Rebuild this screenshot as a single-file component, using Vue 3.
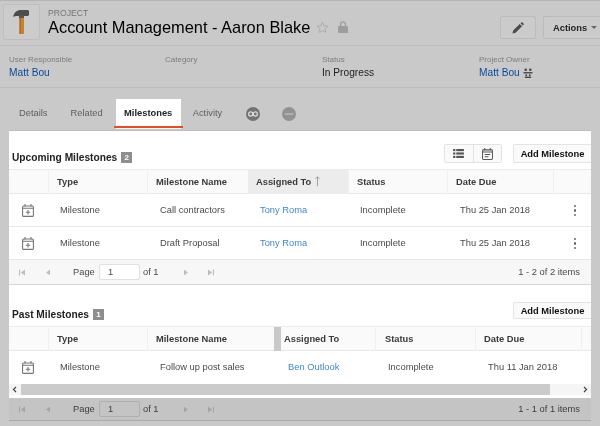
<template>
  <div class="page">
    <header class="top">
      <div class="logo-box">
        <svg width="16" height="24" viewBox="0 0 16 24">
          <path d="M0 7C1 2.500 4 0 8 0h7l1 1v4l-1 1H5C3 6 1 6 0 7z" fill="#4c4c4c" />
          <rect x="6" y="5" width="5" height="3.500" fill="#555" />
          <rect x="6.500" y="8" width="4.500" height="16" rx="0.800" fill="#c8822f" />
          <rect x="6.500" y="8" width="1.300" height="16" fill="#a96b24" />
        </svg>
      </div>
      <div class="title-block">
        <div class="eyebrow">PROJECT</div>
        <div class="title-line">
          <h1>Account Management - Aaron Blake</h1>
          <svg class="star" width="13" height="13" viewBox="0 0 24 24">
            <path d="M12 2.500l2.900 6.300 6.900.8-5.100 4.700 1.400 6.800-6.100-3.400-6.100 3.400 1.400-6.800-5.100-4.700 6.900-.8z" fill="none" stroke="#a9a9a9" stroke-width="1.600" />
          </svg>
          <svg class="lock" width="10" height="12" viewBox="0 0 11 13">
            <path d="M1 5.500h9a1 1 0 0 1 1 1V12a1 1 0 0 1-1 1H1a1 1 0 0 1-1-1V6.500a1 1 0 0 1 1-1z" fill="#9d9d9d" />
            <path d="M2.800 6V3.500a2.700 2.700 0 0 1 5.400 0V6" fill="none" stroke="#9d9d9d" stroke-width="1.500" />
          </svg>
        </div>
      </div>
      <button class="head-btn edit">
        <svg width="12" height="12" viewBox="0 0 13 13">
          <path d="M0.500 12.500l.8-3.400 7-7 2.600 2.600-7 7zM9.200 1.300l.9-.8a1 1 0 0 1 1.300 0l1.100 1.100a1 1 0 0 1 0 1.300l-.8.900z" fill="#4b4b4b" />
        </svg>
      </button>
      <button class="head-btn actions">Actions <span class="caret"></span></button>
    </header>

    <section class="meta">
      <div v-for="m in meta" :key="m.label" class="meta-item">
        <div class="meta-label">{{ m.label }}</div>
        <div class="meta-value" :class="{ link: m.link }">
          {{ m.value }}
          <svg v-if="m.group" class="group" width="10" height="10" viewBox="0 0 11 11" fill="#444">
            <circle cx="3" cy="2" r="1.400" />
            <circle cx="8" cy="2" r="1.400" />
            <rect x="0.500" y="4.500" width="10" height="1.500" />
            <circle cx="3.500" cy="8" r="1" />
            <circle cx="7.500" cy="8" r="1" />
            <rect x="2" y="9.500" width="7" height="1.500" />
          </svg>
        </div>
      </div>
    </section>

    <nav class="tabs">
      <a class="tab details">Details</a>
      <a class="tab related">Related</a>
      <a class="tab active">Milestones</a>
      <a class="tab activity">Activity</a>
      <svg class="round" width="14" height="14" viewBox="0 0 15 15">
        <circle cx="7.500" cy="7.500" r="7.500" fill="#737373" />
        <circle cx="5" cy="7.500" r="2.200" fill="none" stroke="#ddd" stroke-width="1.300" />
        <circle cx="10" cy="7.500" r="2.200" fill="none" stroke="#ddd" stroke-width="1.300" />
      </svg>
      <svg class="round second" width="14" height="14" viewBox="0 0 15 15">
        <circle cx="7.500" cy="7.500" r="7.500" fill="#929292" />
        <rect x="3" y="6.500" width="9" height="2" fill="#b2b2b2" />
      </svg>
    </nav>

    <main class="panel">
      <div class="section-head upcoming-head">
        <h2>Upcoming Milestones <span class="count">2</span></h2>
        <div class="head-tools">
          <div class="view-switch">
            <button>
              <svg width="11" height="9" viewBox="0 0 12 10" fill="#555">
                <rect width="2.500" height="2.400" /><rect x="3.500" width="8.500" height="2.400" />
                <rect y="3.800" width="2.500" height="2.400" /><rect x="3.500" y="3.800" width="8.500" height="2.400" />
                <rect y="7.600" width="2.500" height="2.400" /><rect x="3.500" y="7.600" width="8.500" height="2.400" />
              </svg>
            </button>
            <button>
              <svg width="11" height="12" viewBox="0 0 12 13" fill="none" stroke="#555" stroke-width="1.100">
                <rect x="0.600" y="2" width="10.800" height="10.400" rx="1" />
                <path d="M0.600 4.400h10.800M3 0v2.500M9 0v2.500" />
                <path d="M3 7h6M3 9.500h4" />
              </svg>
            </button>
          </div>
          <button class="add-btn">Add Milestone</button>
        </div>
      </div>

      <div class="grid-wrap">
        <div class="row head upcoming">
          <div class="cell"></div>
          <div class="cell">Type</div>
          <div class="cell">Milestone Name</div>
          <div class="cell sorted">
            Assigned To
            <svg class="arrow" width="5" height="10" viewBox="0 0 5 10" fill="none" stroke="#9a9a9a" stroke-width="0.900">
              <path d="M2.500 10V0.800M0.500 2.800l2-2 2 2" />
            </svg>
          </div>
          <div class="cell">Status</div>
          <div class="cell">Date Due</div>
          <div class="cell"></div>
        </div>
        <div v-for="r in upcoming" :key="r.name" class="row body upcoming">
          <div class="cell icon-cell"><span class="cal-wrap"><svg width="12" height="13" viewBox="0 0 12 13" fill="none" stroke="#777" stroke-width="1.100"><rect x="0.600" y="2" width="10.800" height="10.400" rx="1" /><path d="M0.600 4.200h10.800M3 0v2.500M9 0v2.500M6 6v4.500M3.800 8.200h4.400" /></svg></span></div>
          <div class="cell">Milestone</div>
          <div class="cell">{{ r.name }}</div>
          <div class="cell person">{{ r.who }}</div>
          <div class="cell">Incomplete</div>
          <div class="cell">{{ r.due }}</div>
          <div class="cell kebab"><i></i><i></i><i></i></div>
        </div>
        <div class="pager">
          <div class="pager-left">
            <svg class="pg first" width="6" height="7" viewBox="0 0 8 8" fill="#bdbdbd"><path d="M0 0h1.500v8H0zM8 0v8L2.500 4z" /></svg>
            <svg class="pg prev" width="4" height="7" viewBox="0 0 6 8" fill="#bdbdbd"><path d="M6 0v8L0 4z" /></svg>
            <span class="page-word">Page</span>
            <span class="page-input">1</span>
            <span class="page-of">of 1</span>
            <svg class="pg next" width="4" height="7" viewBox="0 0 6 8" fill="#bdbdbd"><path d="M0 0v8l6-4z" /></svg>
            <svg class="pg last" width="6" height="7" viewBox="0 0 8 8" fill="#bdbdbd"><path d="M8 0H6.500v8H8zM0 0v8l5.500-4z" /></svg>
          </div>
          <span class="items">1 - 2 of 2 items</span>
        </div>
      </div>

      <div class="section-head past-head">
        <h2>Past Milestones <span class="count">1</span></h2>
        <button class="add-btn">Add Milestone</button>
      </div>

      <div class="grid-wrap past-wrap">
        <div class="row head past">
          <div class="cell"></div>
          <div class="cell">Type</div>
          <div class="cell">Milestone Name</div>
          <div class="cell resize"></div>
          <div class="cell">Assigned To</div>
          <div class="cell">Status</div>
          <div class="cell">Date Due</div>
          <div class="cell"></div>
        </div>
        <div class="row body past">
          <div class="cell icon-cell"><span class="cal-wrap"><svg width="12" height="13" viewBox="0 0 12 13" fill="none" stroke="#777" stroke-width="1.100"><rect x="0.600" y="2" width="10.800" height="10.400" rx="1" /><path d="M0.600 4.200h10.800M3 0v2.500M9 0v2.500M6 6v4.500M3.800 8.200h4.400" /></svg></span></div>
          <div class="cell">Milestone</div>
          <div class="cell">Follow up post sales</div>
          <div class="cell"></div>
          <div class="cell person">Ben Outlook</div>
          <div class="cell">Incomplete</div>
          <div class="cell">Thu 11 Jan 2018</div>
          <div class="cell"></div>
        </div>
        <div class="scrollbar">
          <svg class="sb-arrow" width="12" height="7" viewBox="0 0 12 7" fill="none" stroke="#444" stroke-width="1.200"><path d="M7 1L4.500 3.500 7 6" /></svg>
          <div class="sb-track"><div class="sb-thumb"></div></div>
          <svg class="sb-arrow" width="12" height="7" viewBox="0 0 12 7" fill="none" stroke="#444" stroke-width="1.200"><path d="M5 1l2.500 2.500L5 6" /></svg>
        </div>
      </div>
    </main>

    <div class="pager past-pager">
      <div class="pager-left">
        <svg class="pg first" width="6" height="7" viewBox="0 0 8 8" fill="#a4a4a4"><path d="M0 0h1.500v8H0zM8 0v8L2.500 4z" /></svg>
        <svg class="pg prev" width="4" height="7" viewBox="0 0 6 8" fill="#a4a4a4"><path d="M6 0v8L0 4z" /></svg>
        <span class="page-word">Page</span>
        <span class="page-input">1</span>
        <span class="page-of">of 1</span>
        <svg class="pg next" width="4" height="7" viewBox="0 0 6 8" fill="#a4a4a4"><path d="M0 0v8l6-4z" /></svg>
        <svg class="pg last" width="6" height="7" viewBox="0 0 8 8" fill="#a4a4a4"><path d="M8 0H6.500v8H8zM0 0v8l5.500-4z" /></svg>
      </div>
      <span class="items">1 - 1 of 1 items</span>
    </div>
  </div>
</template>

<script setup>
const meta = [
  { label: 'User Responsible', value: 'Matt Bou', link: true },
  { label: 'Category', value: '' },
  { label: 'Status', value: 'In Progress' },
  { label: 'Project Owner', value: 'Matt Bou', link: true, group: true }
]

const upcoming = [
  { name: 'Call contractors', who: 'Tony Roma', due: 'Thu 25 Jan 2018' },
  { name: 'Draft Proposal', who: 'Tony Roma', due: 'Thu 25 Jan 2018' }
]
</script>

<style scoped>
.page {
  width: 600px;
  height: 426px;
  overflow: hidden;
  background: #c9c9c9;
  color: #333;
  font-family: "Liberation Sans", Arial, sans-serif;
  font-size: 9.33px;
  filter: blur(0.45px);
}

.top {
  height: 46px;
  box-sizing: border-box;
  border-top: 1px solid #b5b5b5;
  border-bottom: 1px solid #bdbdbd;
  display: flex;
  align-items: flex-start;
  padding-top: 3px;
  padding-left: 3px;
}
.logo-box {
  width: 37px;
  height: 36px;
  box-sizing: border-box;
  border: 1px solid #bfbfbf;
  border-radius: 2px;
  background: #cccccc;
  display: flex;
  align-items: center;
  justify-content: center;
  margin-right: 8px;
  padding-right: 2px;
}
.title-block { flex: 1; }
.eyebrow {
  color: #757575;
  font-size: 8.67px;
  line-height: 12px;
  margin-top: 3px;
}
.title-line {
  display: flex;
  align-items: center;
  margin-top: -1px;
}
.title-line h1 {
  margin: 0;
  font-size: 16.4px;
  font-weight: 400;
  line-height: 18px;
  color: #000;
}
.star { margin-left: 6px; }
.lock { margin-left: 9px; }
.head-btn {
  height: 23px;
  margin-top: 12px;
  box-sizing: border-box;
  border: 1px solid #bbb;
  border-radius: 2px;
  background: #cbcbcb;
  font-family: inherit;
  padding: 0;
}
.edit {
  width: 36px;
  margin-right: 7px;
  display: flex;
  align-items: center;
  justify-content: center;
}
.actions {
  width: 57px;
  border-right: 0;
  font-size: 9.33px;
  font-weight: 700;
  color: #222;
  text-align: left;
  padding-left: 9px;
  white-space: nowrap;
}
.caret {
  display: inline-block;
  border-left: 3px solid transparent;
  border-right: 3px solid transparent;
  border-top: 3px solid #666;
  margin-left: 1px;
  vertical-align: 2px;
}

.meta {
  height: 42px;
  box-sizing: border-box;
  border-bottom: 1px solid #bdbdbd;
  display: grid;
  grid-template-columns: 156px 157px 157px 1fr;
  padding: 8px 0 0 9px;
}
.meta-label {
  color: #7c7c7c;
  font-size: 8px;
  line-height: 11px;
}
.meta-value {
  font-size: 10.2px;
  line-height: 14px;
  margin-top: 1px;
  color: #222;
  display: flex;
  align-items: center;
  gap: 3px;
}
.meta-value.link { color: #0a4a9c; }

.tabs {
  height: 42px;
  box-sizing: border-box;
  padding: 11px 0 0 19px;
  display: flex;
  align-items: flex-start;
}
.tab {
  height: 30px;
  line-height: 29px;
  box-sizing: border-box;
  color: #5f5f5f;
  font-size: 9.33px;
}
.details { margin-right: 23px; }
.related { margin-right: 13px; }
.tab.active {
  width: 65px;
  text-align: center;
  color: #222;
  font-weight: 700;
  background: #fff;
  position: relative;
  margin-right: 12px;
}
.tab.active::after {
  content: "";
  position: absolute;
  left: -2px;
  right: -2px;
  top: 27px;
  height: 2px;
  background: #ef4a1d;
}
.activity { margin-right: 24px; }
.round { margin-top: 8px; }
.round.second { margin-left: 22px; }

.panel {
  width: 582px;
  height: 268px;
  margin-left: 9px;
  background: #fff;
  border-top: 1px solid #bcbcbc;
  box-sizing: border-box;
  overflow: hidden;
}
.section-head {
  display: flex;
  justify-content: space-between;
  align-items: flex-end;
  padding-left: 3px;
  box-sizing: border-box;
}
.upcoming-head { height: 38px; padding-bottom: 5px; }
.past-head { height: 41px; padding-bottom: 5px; }
.section-head h2 {
  margin: 0;
  font-size: 10.2px;
  line-height: 13px;
  font-weight: 700;
  color: #222;
  display: flex;
  align-items: center;
  gap: 4px;
}
.count {
  display: inline-block;
  width: 11px;
  height: 11px;
  line-height: 11px;
  text-align: center;
  background: #8e8e8e;
  color: #fff;
  font-size: 8px;
  font-weight: 700;
}
.head-tools {
  display: flex;
  align-items: center;
  gap: 11px;
  margin-bottom: 1px;
}
.view-switch {
  display: flex;
  width: 58px;
  height: 19px;
  border: 1px solid #e2e2e2;
  border-radius: 2px;
  box-sizing: border-box;
}
.view-switch button {
  flex: 1;
  padding: 0;
  border: 0;
  background: #fafafa;
  display: flex;
  align-items: center;
  justify-content: center;
}
.view-switch button + button { border-left: 1px solid #e2e2e2; }
.add-btn {
  width: 78px;
  height: 19px;
  padding: 0;
  border: 1px solid #e4e4e4;
  border-right: 0;
  border-radius: 2px 0 0 2px;
  background: #fafafa;
  color: #111;
  font-family: inherit;
  font-size: 9.33px;
  font-weight: 700;
  white-space: nowrap;
}
.past-head .add-btn { height: 17px; margin-bottom: 2px; }

.grid-wrap {
  border-top: 1px solid #ececec;
  width: 582px;
}
.row { display: grid; }
.row.upcoming {
  grid-template-columns: 39px 99px 101px 100px 99px 106px 38px;
}
.row.past {
  grid-template-columns: 39px 99px 127px 7px 94px 100px 106px 10px;
}
.row.head {
  height: 24px;
  background: #fafafa;
  border-bottom: 1px solid #e8e8e8;
  box-sizing: border-box;
}
.row.head .cell {
  border-left: 1px solid #f0f0f0;
  padding-left: 8px;
  line-height: 24px;
  font-weight: 700;
  font-size: 9.33px;
  color: #3a3a3a;
  box-sizing: border-box;
}
.row.head .cell:first-child { border-left: 0; }
.row.head .sorted { background: #ececec; border-left: 0; }
.arrow { margin-left: 1px; vertical-align: -1px; }
.row.head .resize { background: #c9c9c9; padding: 0; border-left: 0; }
.row.head.past .cell:nth-child(5) { padding-left: 3px; border-left: 0; }
.row.head.past .cell:nth-child(6) { padding-left: 9px; }
.row.body {
  height: 33px;
  box-sizing: border-box;
  border-bottom: 1px solid #e8e8e8;
}
.row.body .cell {
  padding-left: 12px;
  line-height: 33px;
  font-size: 9.33px;
  color: #4a4a4a;
  white-space: nowrap;
}
.row.body .cell:nth-child(3) { padding-left: 13px; }
.row.body.upcoming .cell:nth-child(6) { padding-left: 13px; }
.row.body.past .cell:nth-child(5) { padding-left: 7px; }
.row.body.past .cell:nth-child(6),
.row.body.past .cell:nth-child(7) { padding-left: 13px; }
.row.body .person { color: #3f88cf; }
.row.body .icon-cell { padding-left: 13px; }
.cal-wrap { display: flex; height: 100%; align-items: center; }
.row.body .kebab {
  padding: 0 0 0 21px;
  display: flex;
  flex-direction: column;
  justify-content: center;
  gap: 2px;
}
.kebab i {
  width: 2.4px;
  height: 2.4px;
  border-radius: 50%;
  background: #666;
}

.pager {
  height: 25px;
  box-sizing: border-box;
  border-bottom: 1px solid #d6d6d6;
  background: #f7f7f7;
  display: flex;
  align-items: center;
  justify-content: space-between;
  padding-right: 11px;
  font-size: 9.33px;
  color: #4a4a4a;
}
.pager-left {
  display: flex;
  align-items: center;
  white-space: nowrap;
}
.pg.first { margin-left: 10px; }
.pg.prev { margin-left: 21px; }
.page-word { margin-left: 23px; width: 22px; }
.page-input {
  display: inline-block;
  width: 41px;
  height: 16px;
  line-height: 15px;
  margin-left: 4px;
  padding-left: 8px;
  box-sizing: border-box;
  border: 1px solid #e0e0e0;
  border-radius: 2px;
  background: #fff;
}
.page-of { margin-left: 3px; width: 15px; }
.pg.next { margin-left: 26px; }
.pg.last { margin-left: 20px; }

.past-wrap .row.body { height: 33px; border-bottom: 0; }
.scrollbar {
  height: 11px;
  display: flex;
  align-items: center;
  background: #f5f5f5;
}
.sb-arrow { flex: none; }
.sb-track { flex: 1; height: 11px; }
.sb-thumb { width: 529px; height: 100%; background: #cbcbcb; }

.past-pager {
  margin-left: 9px;
  width: 582px;
  height: 23px;
  background: #c4c4c4;
  border-bottom: 1px solid #aaa;
  color: #3c3c3c;
}
.past-pager .page-input {
  background: #c4c4c4;
  border-color: #aeaeae;
}
</style>
